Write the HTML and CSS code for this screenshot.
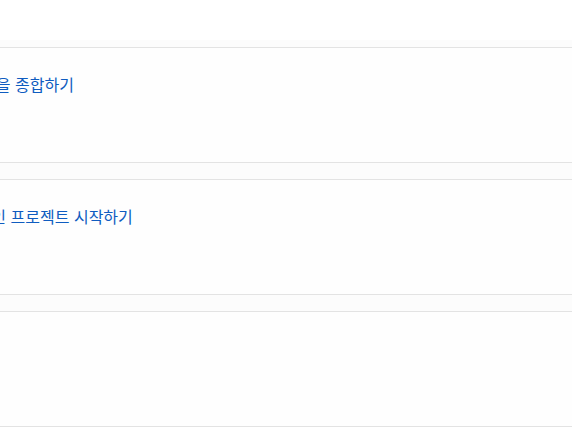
FILE: index.html
```html
<!DOCTYPE html>
<html lang="ko">
<head>
<meta charset="utf-8">
<link rel="stylesheet" href="styles.css">
</head>
<body>
<div class="top"></div>
<div class="list">
  <div class="card"><a class="title">각 팀 의견을 종합하기</a></div>
  <div class="card"><a class="title">나만의 개인 프로젝트 시작하기</a></div>
  <div class="card"><a class="title">요약하기</a></div>
</div>
</body>
</html>
```
FILE: styles.css
```css
html, body {
  margin: 0;
  padding: 0;
  background: #ffffff;
  overflow: hidden;
}
body {
  font-family: "Noto Sans CJK KR", "Noto Sans", sans-serif;
  width: 572px;
  height: 448px;
}
.top {
  height: 40px;
  background: #ffffff;
}
.list {
  margin-left: -96px;
  margin-right: -40px;
  padding-top: 7px;
  background: #fcfcfc;
  display: flex;
  flex-direction: column;
  gap: 16px;
}
.card {
  box-sizing: border-box;
  height: 116px;
  background: #fefefe;
  border-top: 1px solid #e3e3e3;
  border-bottom: 1px solid #e3e3e3;
  padding: 25px 24px 0;
}
.title {
  display: block;
  font-size: 16px;
  line-height: 22px;
  color: #0f5cc0;
  text-decoration: none;
  white-space: nowrap;
}
```
